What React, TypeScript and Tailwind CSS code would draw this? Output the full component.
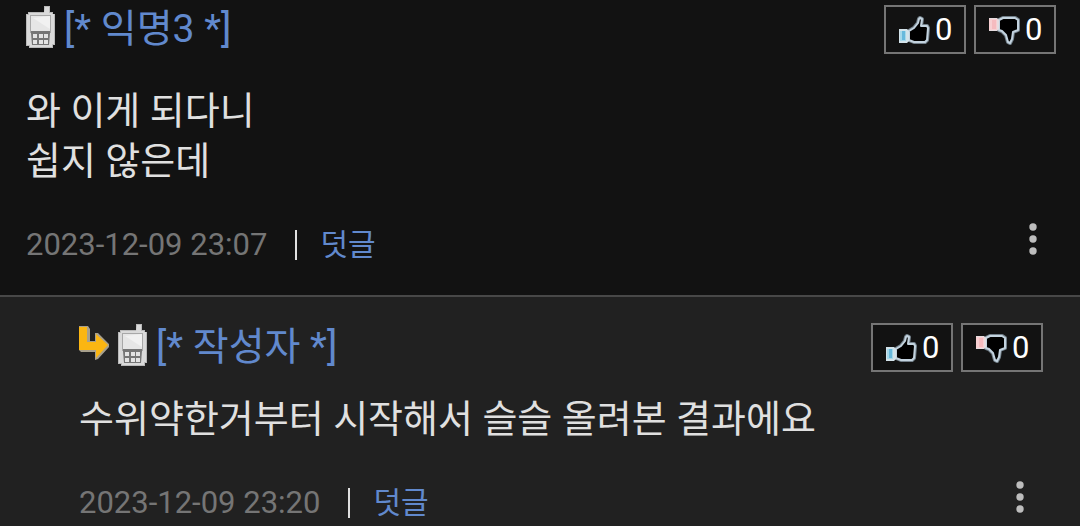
import React from 'react';

function PhoneIcon() {
  return (
    <svg viewBox="0 0 29 42" className="mb-1 h-[42px] w-[29px] shrink-0" role="img" aria-label="모바일">
      <path d="M18 0h6v6h3v2h2v31h-2v3H3v-2H0V8h2V6h16z" fill="#b9b9b9" />
      <path d="M19 1h4v6h3v1h2v30h-2v3H4v-2H1V9h2V7h15z" fill="#dadada" />
      <rect x="4" y="9" width="21" height="18" fill="#a8a8a8" />
      <rect x="5" y="10" width="19" height="15" fill="#e6e6e6" />
      <path d="M7 12l17-2v13z" fill="#f1f1f1" />
      <path d="M5 25h19v2l-1 12H6L5 27z" fill="#767676" />
      <path d="M7 28h4v4H7zM13 28h4v4h-4zM18 28h4v4h-4zM7 34h4v4H7zM13 34h4v4h-4zM18 34h4v4h-4z" fill="#e4e4e4" />
    </svg>
  );
}

function ReplyArrow() {
  return (
    <svg viewBox="0 0 30 34" className="mb-2 h-[34px] w-[30px] shrink-0" aria-hidden="true">
      <path d="M0 0h9l2 3v12h5V7h3l11 11v3L19 33l-3 1v-8H2l-2-2z" fill="#a8a08c" />
      <path d="M0 1h8v15h9V8l12 11-12 13v-8H0z" fill="#fbb612" />
    </svg>
  );
}

function ThumbUp() {
  return (
    <svg viewBox="0 0 31 29" className="mt-[3px] h-[29px] w-[31px] shrink-0" aria-hidden="true">
      <path d="M10 15l5-3 4-5 1-4 1-1 2 1-1 7h6l1 2-1 12-2 2H15l-5-2z" fill="#000" stroke="#73808a" strokeWidth="4" strokeLinejoin="round" />
      <path d="M10 15l5-3 4-5 1-4 1-1 2 1-1 7h6l1 2-1 12-2 2H15l-5-2z" fill="#000" stroke="#c3d3df" strokeWidth="2" strokeLinejoin="round" />
      <path d="M0 13h8l2 2v10l-2 2H0z" fill="#d3e3ea" />
      <path d="M1 15h6v10H1z" fill="#a5d8ea" />
      <path d="M3 15h3v9H3z" fill="#68b9dc" />
    </svg>
  );
}

function ThumbDown() {
  return (
    <svg viewBox="0 0 31 29" className="mt-[3px] h-[29px] w-[31px] shrink-0" aria-hidden="true">
      <path d="M10 4l4-2h12l3 2v10l-5 2-1 7-2 4-2-1-2-7-4-4-3-1z" fill="#000" stroke="#73808a" strokeWidth="4" strokeLinejoin="round" />
      <path d="M10 4l4-2h12l3 2v10l-5 2-1 7-2 4-2-1-2-7-4-4-3-1z" fill="#000" stroke="#c3d3df" strokeWidth="2" strokeLinejoin="round" />
      <path d="M0 2h8l2 2v9l-2 2H0z" fill="#e6dcdf" />
      <path d="M0 3h8v11H0z" fill="#f7cfd2" />
      <path d="M3 4h4v9H3z" fill="#f5bbbf" />
    </svg>
  );
}

function VoteButton({ label, count, children }: { label: string; count: number; children: React.ReactNode }) {
  return (
    <button
      type="button"
      aria-label={`${label} ${count}`}
      className="flex h-[49px] min-w-[82px] items-center gap-[5px] border-2 border-[#757575] bg-[#121212] pl-[13px] pr-[10px] text-[31px] leading-9 text-white"
    >
      {children}
      <span className="pt-[2px]">{count}</span>
    </button>
  );
}

function CommentHeader({ author, reply = false }: { author: string; reply?: boolean }) {
  return (
    <header className="flex items-center justify-between">
      <div className="flex items-center gap-[9px]">
        {reply && <ReplyArrow />}
        <PhoneIcon />
        <a href="#author" className="text-[39px] leading-[50px] text-[#6189cd]">{`[* ${author} *]`}</a>
      </div>
      <div className="flex gap-2">
        <VoteButton label="추천" count={0}><ThumbUp /></VoteButton>
        <VoteButton label="비추천" count={0}><ThumbDown /></VoteButton>
      </div>
    </header>
  );
}

function CommentFooter({ time }: { time: string }) {
  return (
    <footer className="flex items-start justify-between">
      <div className="flex items-center pt-[5px] text-[31px] leading-9">
        <time className="text-[#757575]">{time}</time>
        <span className="ml-7 mr-[23px] h-[30px] w-[2px] bg-[#e0e0e0]" />
        <a href="#reply" className="text-[30px] text-[#6189cd]">덧글</a>
      </div>
      <button type="button" aria-label="더보기" className="px-[19px]">
        <svg viewBox="0 0 8 34" className="h-[34px] w-2" fill="#bdbdbd" aria-hidden="true">
          <circle cx="4" cy="5" r="3.7" />
          <circle cx="4" cy="17" r="3.7" />
          <circle cx="4" cy="29" r="3.7" />
        </svg>
      </button>
    </footer>
  );
}

export default function App() {
  return (
    <main
      lang="ko"
      className="min-h-screen bg-[#212121] font-['Roboto','Noto_Sans_CJK_KR',sans-serif] text-[#e0e0e0]"
    >
      <article className="flex flex-col border-b-2 border-[#484848] bg-[#121212] pb-8 pl-[26px] pr-6 pt-1">
        <CommentHeader author="익명3" />
        <p className="mb-9 mt-8 text-[38px] leading-[50px]">
          와 이게 되다니
          <br />
          쉽지 않은데
        </p>
        <CommentFooter time="2023-12-09 23:07" />
      </article>
      <article className="flex flex-col pl-[79px] pr-[37px] pt-[25px]">
        <CommentHeader author="작성자" reply />
        <p className="mb-9 mt-[22px] text-[38px] leading-[50px]">수위약한거부터 시작해서 슬슬 올려본 결과에요</p>
        <CommentFooter time="2023-12-09 23:20" />
      </article>
    </main>
  );
}
